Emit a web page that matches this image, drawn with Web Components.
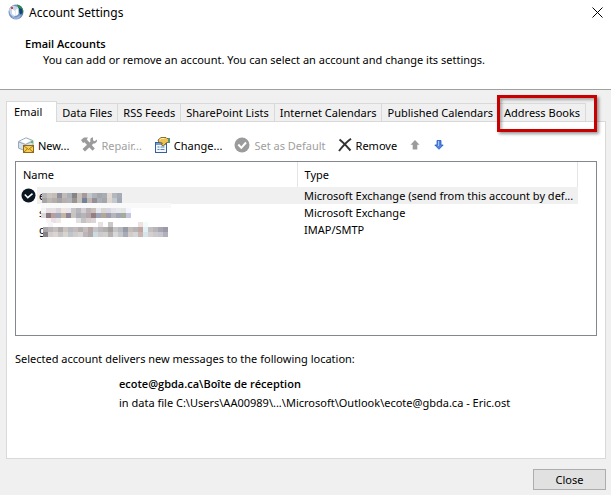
<!DOCTYPE html>
<html lang="en">
<head>
<meta charset="utf-8">
<title>Account Settings</title>
<style>
  body {
    margin: 0;
    background: #f0f0f0;
    color: #000;
    font: 11px/17px "Noto Sans", "Open Sans", sans-serif;
    --strong-font: "Open Sans", "Noto Sans", sans-serif;
  }
</style>
</head>
<body>
<account-settings></account-settings>

<script>
const icons = {
  globe: `<svg width="16" height="16" viewBox="0 0 16 16">
    <circle cx="8" cy="8" r="7.5" fill="#7390c4"/>
    <path d="M9 .6a7.5 7.5 0 0 1 6.4 6.4l-1 4-3-2-1-4z" fill="#2f8a4c"/>
    <path d="M11 4l3 1 .5 4-2.5 1.5z" fill="#153f86"/>
    <path d="M1 5l4-3.5L10 3v8l-5 2-3-3z" fill="#c5d5ec"/>
    <path d="M4 5l3 2v5l-3-2zM7.5 6l3-2v6l-3 2z" fill="#fff"/>
    <path d="M3 13l5 .5 5-2.5-2 3.5-4 .5z" fill="#9fb4d8"/>
    <rect x="3" y="3" width="2" height="2" fill="#e0402f"/>
  </svg>`,
  close: `<svg width="11" height="11" viewBox="0 0 11 11"><path d="M.5 .5l10 10M10.5 .5l-10 10" stroke="#000" fill="none"/></svg>`,
  new: `<svg width="16" height="16" viewBox="0 0 16 16">
    <path d="M.5 4.5L8 .8l7 2.8v6l-7 4.5-7.5-3z" fill="#d6e0ec" stroke="#9aa7b8"/>
    <path d="M1 5l6.5 2.5L15 4" fill="none" stroke="#9aa7b8"/>
    <path d="M2 4.3l6-2.7 5 2-5.5 2.8z" fill="#fff"/>
    <rect x="13" y="4" width="2" height="2" fill="#4fc44f"/>
    <rect x="5.5" y="8.5" width="10" height="7" fill="#f7cd55" stroke="#8d6a17"/>
    <path d="M6 9l4.5 3.5L15 9M6 15l3.3-3M15 15l-3.3-3" fill="none" stroke="#a37b1c"/>
  </svg>`,
  repair: `<svg width="16" height="16" viewBox="0 0 16 16" fill="#9b9b9b">
    <path d="M0 3L3 .5h4l-1.200 2 8 9-2.300 2.300-8-8.500L2 6z"/>
    <path d="M10 1l2-.8v3l1.500 1L16 2.500c.3 2.500-1.300 4-3.500 4l-8.500 8L1.500 12l8-7.500C9 3 9.200 2 10 1z"/>
  </svg>`,
  change: `<svg width="16" height="16" viewBox="0 0 16 16">
    <rect x="1.5" y="5.5" width="11" height="10" fill="#f4f8fd" stroke="#31629d"/>
    <rect x="2" y="6" width="10" height="2" fill="#6da1dc"/>
    <path d="M3.5 10h2M6.5 10h4M3.5 12.5h2M6.5 12.5h4" stroke="#5784b8"/>
    <path d="M4 3L7 .5h5l1 1h3v4h-3L11 7 9.500 9l-2-1 .8-2L5 5.500z" fill="#edc254" stroke="#73531b" stroke-width=".8"/>
    <path d="M5.5 3l2-1.5h3" fill="none" stroke="#fff2ae"/>
    <rect x="14" y="1" width="2" height="5" fill="#5b9272"/>
  </svg>`,
  default: `<svg width="16" height="16" viewBox="0 0 16 16"><circle cx="8" cy="8" r="7.5" fill="#9b9b9b"/><path d="M4.3 7.5l3 3.3L12 5.500" fill="none" stroke="#fff" stroke-width="2"/></svg>`,
  remove: `<svg width="14" height="14" viewBox="0 0 14 14"><path d="M1.5 1.5C5 4 9 8.500 12.500 12.500" fill="none" stroke="#333" stroke-width="2"/><path d="M13 .8C8.500 4 4.500 8.500 1 13" fill="none" stroke="#333" stroke-width="2"/></svg>`,
  up: `<svg width="12" height="10" viewBox="-1 0 12 10"><path d="M5 0l4.500 4.800H7.300v4.700H2.700V4.800H.5z" fill="#9b9b9b"/></svg>`,
  down: `<svg width="12" height="10" viewBox="-1 0 12 10"><path d="M5 9.300L9.200 5H7V.5H3V5H.8z" fill="#4f86e8" stroke="#2857b4" stroke-width=".8"/><path d="M4.500 1v5" stroke="#a6c6ff"/></svg>`,
  check: `<svg width="15" height="15" viewBox="0 0 15 15"><circle cx="7.5" cy="7.5" r="7" fill="#0b1722"/><path d="M3.8 6.500l3 3.200 4.700-4" fill="none" stroke="#fff" stroke-width="1.6"/></svg>`
};

// blurred out addresses, one colour per 5px cell, a dot is an empty cell
const accounts = [
  {first: 'e', isDefault: true, type: 'Microsoft Exchange (send from this account by def...', cells: [
    '.',
    '#b5b5b5 #c9c4c0 #c5bcb8 #8f8f9e #c2bcb8 #a9b0ba #858585 #c5c0bb #a59a99 #c4c8cc #aeb2b9 #a5a5ab #a8adb5 #e2d9d2 #b3b8bf #a6abb5',
    '#a5a5a5 #bcb7b3 #b3adab #a5a3a8 #b8b0ac #b4b4bb #9a9591 #c6c0bd #75829a #bdb5ae #958f97 #aaaeb5 #a3a7ab #ddd5cf #c5c9ce #a1a9b5'
  ]},
  {first: 's', type: 'Microsoft Exchange', cells: [
    Array(26).fill('#f9f9f9').join(' '),
    '#f3f3f3 #e3dfe0 #e6dfe3 #d8d4da #eee6e2 #e5e5ea #c9c6c8 #b6b6bb #d4ced3 #b9b4b5 #c9bfbc #e4e8ee #dcd6d2 #d8d8e4 #e4e4e8 #e5e9ee #e5e5e2 #f3f5ff',
    '#dcd8dc #8f7880 #b5a0a0 #9da5bd #c5b5a0 #8f8597 #c8c5c0 #a9adb5 #b5b5b8 #b5a5ad #957d82 #9ea3b8 #b0a898 #9d9dab #b5b5bd #a3a5b5 #a3ab9c #c5c5dc',
    '. #f8f4f4 #e8e0e4 #eee8e6 . . . #e4e0e2 #c6c3c5 #d6cfce #dbd5d8'
  ]},
  {first: 'g', type: 'IMAP/SMTP', cells: [
    '. #f6f4f4 . . . . . . . . . #e6e2e2 . #c9c9c9 . . . . . #eee2e0 #f2fbfc',
    '#a9a5a8 #b8b4b8 #c5c0c0 #b0a9ac #c9c4bf #b6b8bb #c3bbbf #b3adb0 #c5bcbc #b5a5a5 #c5c5c9 #b8b8bb #b5b0b0 #a39f9f #c5c5c9 #b5b9bd #989ba5 #c5bcb9 #b5b5b9 #c0a5a0 #e0f0f5 #c5c0c0 #b5b5bc #a8a5ad #9b99ae',
    '#858288 #d3cccc #ddd4d0 #c5c5c9 #d8d5d0 #c0c5c9 #d0cccc #d6d3d3 #bdb6b9 #b0a9ac #c9dce0 #d0c9c9 #cfcfcf #b5b1b1 #d8d8dc #c6c6c6 #a5abb8 #d3ccc6 #d5d5d5 #c8b5b3 #d5e5e9 #d4d0d0 #ccc9c9 #c5c5ce #b3b0bd'
  ]}
];

const mosaic = rows => {
  const rects = rows.map((row, y) => row.split(' ').map((fill, x) =>
    fill === '.' ? '' : `<rect x="${x * 5}" y="${y * 5}" width="5" height="5" fill="${fill}"/>`).join('')).join('');
  return `<svg class="mosaic" width="130" height="${rows.length * 5}" shape-rendering="crispEdges">${rects}</svg>`;
};

customElements.define('title-bar', class TitleBar extends HTMLElement {
  constructor() {
    super();
    this.attachShadow({mode: 'open'});
    this.shadowRoot.innerHTML = this.template;
  }
  get template() {
    return `<style>
      :host {
        display: flex;
        align-items: center;
        height: 24px;
        padding: 0 8px;
        gap: 5px;
        font-size: 12px;
      }
      span {
        flex: 1;
      }
      button {
        display: flex;
        padding: 0;
        border: 0;
        background: none;
      }
    </style>
    ${icons.globe}
    <span><slot></slot></span>
    <button aria-label="Close window">${icons.close}</button>
    `
  }
});

customElements.define('page-intro', class PageIntro extends HTMLElement {
  constructor() {
    super();
    this.attachShadow({mode: 'open'});
    this.shadowRoot.innerHTML = this.template;
  }
  get template() {
    return `<style>
      :host {
        display: block;
        padding: 11px 24px 21px 25px;
      }
      h1 {
        margin: 0;
        font: 600 11px/17px var(--strong-font);
      }
      p {
        margin: 0 0 0 18px;
        line-height: 16px;
      }
    </style>
    <h1><slot name="heading"></slot></h1>
    <p><slot></slot></p>
    `
  }
});

customElements.define('tab-item', class TabItem extends HTMLElement {
  constructor() {
    super();
    this.attachShadow({mode: 'open'});
    this.shadowRoot.innerHTML = this.template;
  }
  get template() {
    return `<style>
      :host {
        display: block;
        position: relative;
      }
      button {
        display: block;
        height: 18px;
        padding: 0 5px;
        border: solid #d9d9d9;
        border-width: 1px 1px 0 0;
        background: #f0f0f0;
        color: inherit;
        font: inherit;
        white-space: nowrap;
      }
      :host([selected]) button {
        height: 21px;
        margin-bottom: -1px;
        padding: 0 14px 2px 7px;
        border-left-width: 1px;
        background: #fff;
      }
      :host([marked])::after {
        content: '';
        position: absolute;
        inset: -8px -11px -11px -2px;
        border: 3px solid #c80000;
        box-shadow: 2px 2px 3px rgba(0, 0, 0, 0.4), inset 2px 2px 3px rgba(0, 0, 0, 0.3);
      }
    </style>
    <button role="tab" aria-selected="${this.hasAttribute('selected')}"><slot></slot></button>
    `
  }
});

customElements.define('tab-panel', class TabPanel extends HTMLElement {
  constructor() {
    super();
    this.attachShadow({mode: 'open'});
    this.shadowRoot.innerHTML = this.template;
  }
  get template() {
    return `<style>
      :host {
        display: block;
        padding: 11px 5px 0 6px;
      }
      nav {
        display: flex;
        align-items: flex-end;
      }
      section {
        padding: 12px 8px 46px;
        border: 1px solid #d9d9d9;
        background: #fff;
      }
    </style>
    <nav role="tablist"><slot name="tab"></slot></nav>
    <section role="tabpanel"><slot></slot></section>
    `
  }
});

customElements.define('tool-button', class ToolButton extends HTMLElement {
  constructor() {
    super();
    this.attachShadow({mode: 'open'});
    this.shadowRoot.innerHTML = this.template;
  }
  get template() {
    const label = this.getAttribute('label');
    return `<style>
      :host {
        display: block;
      }
      button {
        display: flex;
        align-items: center;
        gap: 4px;
        height: 22px;
        padding: 0;
        border: 0;
        background: none;
        color: inherit;
        font: inherit;
        white-space: nowrap;
      }
      button:disabled {
        color: #a0a0a0;
      }
    </style>
    <button ${label ? `aria-label="${label}"` : ''} ${this.hasAttribute('disabled') ? 'disabled' : ''}>
      ${icons[this.getAttribute('icon')]}<slot></slot>
    </button>
    `
  }
});

customElements.define('tool-bar', class ToolBar extends HTMLElement {
  constructor() {
    super();
    this.attachShadow({mode: 'open'});
    this.shadowRoot.innerHTML = this.template;
  }
  get template() {
    return `<style>
      :host {
        display: flex;
        gap: 12px;
        padding: 0 3px 5px;
      }
    </style>
    <slot></slot>
    `
  }
});

customElements.define('account-list', class AccountList extends HTMLElement {
  constructor() {
    super();
    this.attachShadow({mode: 'open'});
    this.shadowRoot.innerHTML = this.template;
  }
  row({first, isDefault, type, cells}) {
    return `<tr class="${isDefault ? 'current' : ''}">
      <td class="mark">${isDefault ? icons.check : ''}</td>
      <td><span class="name">${first}${mosaic(cells)}</span></td>
      <td class="type">${type}</td>
    </tr>`
  }
  get template() {
    return `<style>
      :host {
        display: block;
        min-height: 173px;
        padding-right: 18px;
        border: 1px solid #828790;
      }
      table {
        width: 100%;
        table-layout: fixed;
        border-collapse: collapse;
      }
      .icon-col {
        width: 21px;
      }
      .name-col {
        width: 260px;
      }
      th {
        height: 23px;
        padding: 1px 7px;
        border-right: 1px solid #e5e5e5;
        font-weight: normal;
        text-align: left;
      }
      td {
        height: 17px;
        padding: 0 0 0 2px;
        white-space: nowrap;
      }
      .type {
        padding-left: 7px;
        overflow: hidden;
        text-overflow: ellipsis;
      }
      .current td:not(.mark) {
        background: #f0f0f0;
      }
      .mark {
        padding: 0 0 0 5px;
      }
      .mark svg {
        display: block;
      }
      .name {
        display: flex;
        align-items: center;
        height: 17px;
      }
      .mosaic {
        margin-left: -3px;
      }
    </style>
    <table>
      <colgroup><col class="icon-col"><col class="name-col"><col></colgroup>
      <thead><tr><th colspan="2">Name</th><th>Type</th></tr></thead>
      <tbody>${accounts.map(account => this.row(account)).join('')}</tbody>
    </table>
    `
  }
});

customElements.define('delivery-info', class DeliveryInfo extends HTMLElement {
  constructor() {
    super();
    this.attachShadow({mode: 'open'});
    this.shadowRoot.innerHTML = this.template;
  }
  get template() {
    return `<style>
      :host {
        display: block;
        padding-top: 14px;
      }
      p {
        margin: 0;
      }
      div {
        display: grid;
        gap: 2px;
        margin: 8px 0 1px 104px;
      }
      strong {
        font: 600 11px/17px var(--strong-font);
      }
    </style>
    <p><slot></slot></p>
    <div>
      <strong><slot name="folder"></slot></strong>
      <slot name="file"></slot>
    </div>
    `
  }
});

customElements.define('dialog-footer', class DialogFooter extends HTMLElement {
  constructor() {
    super();
    this.attachShadow({mode: 'open'});
    this.shadowRoot.innerHTML = this.template;
  }
  get template() {
    return `<style>
      :host {
        display: flex;
        justify-content: flex-end;
        padding: 10px 5px 4px;
      }
      button {
        width: 73px;
        height: 21px;
        padding: 0;
        border: 1px solid #adadad;
        background: #e1e1e1;
        color: inherit;
        font: inherit;
      }
    </style>
    <button><slot></slot></button>
    `
  }
});

customElements.define('account-settings', class AccountSettings extends HTMLElement {
  constructor() {
    super();
    this.attachShadow({mode: 'open'});
    this.shadowRoot.innerHTML = this.template;
  }
  get template() {
    return `<style>
      :host {
        display: flex;
        flex-direction: column;
      }
      header {
        border-bottom: 1px solid #a0a0a0;
        background: #fff;
      }
    </style>
    <header>
      <title-bar>Account Settings</title-bar>
      <page-intro>
        <span slot="heading">Email Accounts</span>
        You can add or remove an account. You can select an account and change its settings.
      </page-intro>
    </header>
    <tab-panel>
      <tab-item slot="tab" selected>Email</tab-item>
      <tab-item slot="tab">Data Files</tab-item>
      <tab-item slot="tab">RSS Feeds</tab-item>
      <tab-item slot="tab">SharePoint Lists</tab-item>
      <tab-item slot="tab">Internet Calendars</tab-item>
      <tab-item slot="tab">Published Calendars</tab-item>
      <tab-item slot="tab" marked>Address Books</tab-item>
      <tool-bar>
        <tool-button icon="new">New...</tool-button>
        <tool-button icon="repair" disabled>Repair...</tool-button>
        <tool-button icon="change">Change...</tool-button>
        <tool-button icon="default" disabled>Set as Default</tool-button>
        <tool-button icon="remove">Remove</tool-button>
        <tool-button icon="up" label="Move up" disabled></tool-button>
        <tool-button icon="down" label="Move down"></tool-button>
      </tool-bar>
      <account-list></account-list>
      <delivery-info>
        Selected account delivers new messages to the following location:
        <span slot="folder">ecote@gbda.ca\\Boîte de réception</span>
        <span slot="file">in data file C:\\Users\\AA00989\\...\\Microsoft\\Outlook\\ecote@gbda.ca - Eric.ost</span>
      </delivery-info>
    </tab-panel>
    <dialog-footer>Close</dialog-footer>
    `
  }
});
</script>
</body>
</html>
